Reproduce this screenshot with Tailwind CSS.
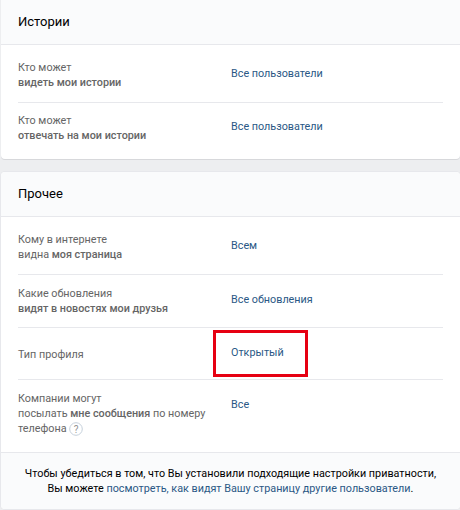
<!DOCTYPE html>
<html lang="ru">
  <head>
    <meta charset="UTF-8" />
    <title>Приватность</title>
    <script src="https://cdn.jsdelivr.net/npm/@tailwindcss/browser@4"></script>
  </head>
  <body class="bg-[#edeef0] font-['Roboto',sans-serif] text-[10.8px] leading-[15px] text-[#656565] w-[460px] h-[510px] overflow-hidden relative">
    <!-- истории -->
    <section class="ml-px bg-white rounded-b-[4px] shadow-[0_1px_0_0_#d7d8db] h-[159px]">
      <h2 class="h-[45px] pl-[17px] pt-[13px] bg-[#fafbfc] border-b border-[#e7e8ec] text-[13px] leading-[17px] text-black">Истории</h2>
      <div class="mx-[17px] h-[58px] pt-[15px] border-b border-[#e7e8ec] flex">
        <div class="w-[213px]">Кто может<br /><span class="font-medium">видеть мои истории</span></div>
        <a class="pt-[6px] text-[#2a5885]">Все пользователи</a>
      </div>
      <div class="mx-[17px] pt-[10px] flex">
        <div class="w-[213px]">Кто может<br /><span class="font-medium">отвечать на мои истории</span></div>
        <a class="pt-[6px] text-[#2a5885]">Все пользователи</a>
      </div>
    </section>

    <!-- прочее -->
    <section class="ml-px mt-[13px] bg-white rounded-[4px] shadow-[0_0_0_1px_#e7e8ec] h-[337px] overflow-hidden">
      <h2 class="h-[45px] pl-[17px] pt-[13px] bg-[#fafbfc] border-b border-[#e7e8ec] text-[13px] leading-[17px] text-black">Прочее</h2>
      <div class="mx-[17px] h-[58px] pt-[15px] border-b border-[#e7e8ec] flex">
        <div class="w-[213px]">Кому в интернете<br />видна <span class="font-medium">моя страница</span></div>
        <a class="pt-[6px] text-[#2a5885]">Всем</a>
      </div>
      <div class="mx-[17px] h-[53px] pt-[11px] border-b border-[#e7e8ec] flex">
        <div class="w-[213px]">Какие обновления<br /><span class="font-medium">видят в новостях мои друзья</span></div>
        <a class="pt-[6px] text-[#2a5885]">Все обновления</a>
      </div>
      <div class="mx-[17px] h-[52px] pt-[19px] border-b border-[#e7e8ec] flex">
        <div class="w-[213px]">Тип профиля</div>
        <a class="-mt-[2px] text-[#2a5885]">Открытый</a>
      </div>
      <div class="mx-[17px] h-[72px] pt-[11px] flex">
        <div class="w-[213px]">
          Компании могут<br />посылать <span class="font-medium">мне сообщения</span> по номеру<br />телефона
          <svg class="inline-block align-[-4px]" width="14" height="14" viewBox="0 0 14 14">
            <circle cx="7" cy="7" r="6.3" fill="none" stroke="#c5d0db" />
            <text x="7" y="10.5" text-anchor="middle" font-size="10" fill="#939393" font-family="Roboto">?</text>
          </svg>
        </div>
        <a class="pt-[6px] text-[#2a5885]">Все</a>
      </div>
      <p class="h-[58px] pt-[13px] bg-[#fafbfc] border-t border-[#e7e8ec] text-center text-black">
        Чтобы убедиться в том, что Вы установили подходящие настройки приватности,<br />Вы можете <a class="text-[#2a5885]">посмотреть, как видят Вашу страницу другие пользователи</a>.
      </p>
    </section>

    <!-- красная рамка -->
    <div class="absolute left-[213px] top-[330px] w-[95px] h-[47px] border-[3px] border-[#e60012]"></div>
  </body>
</html>
